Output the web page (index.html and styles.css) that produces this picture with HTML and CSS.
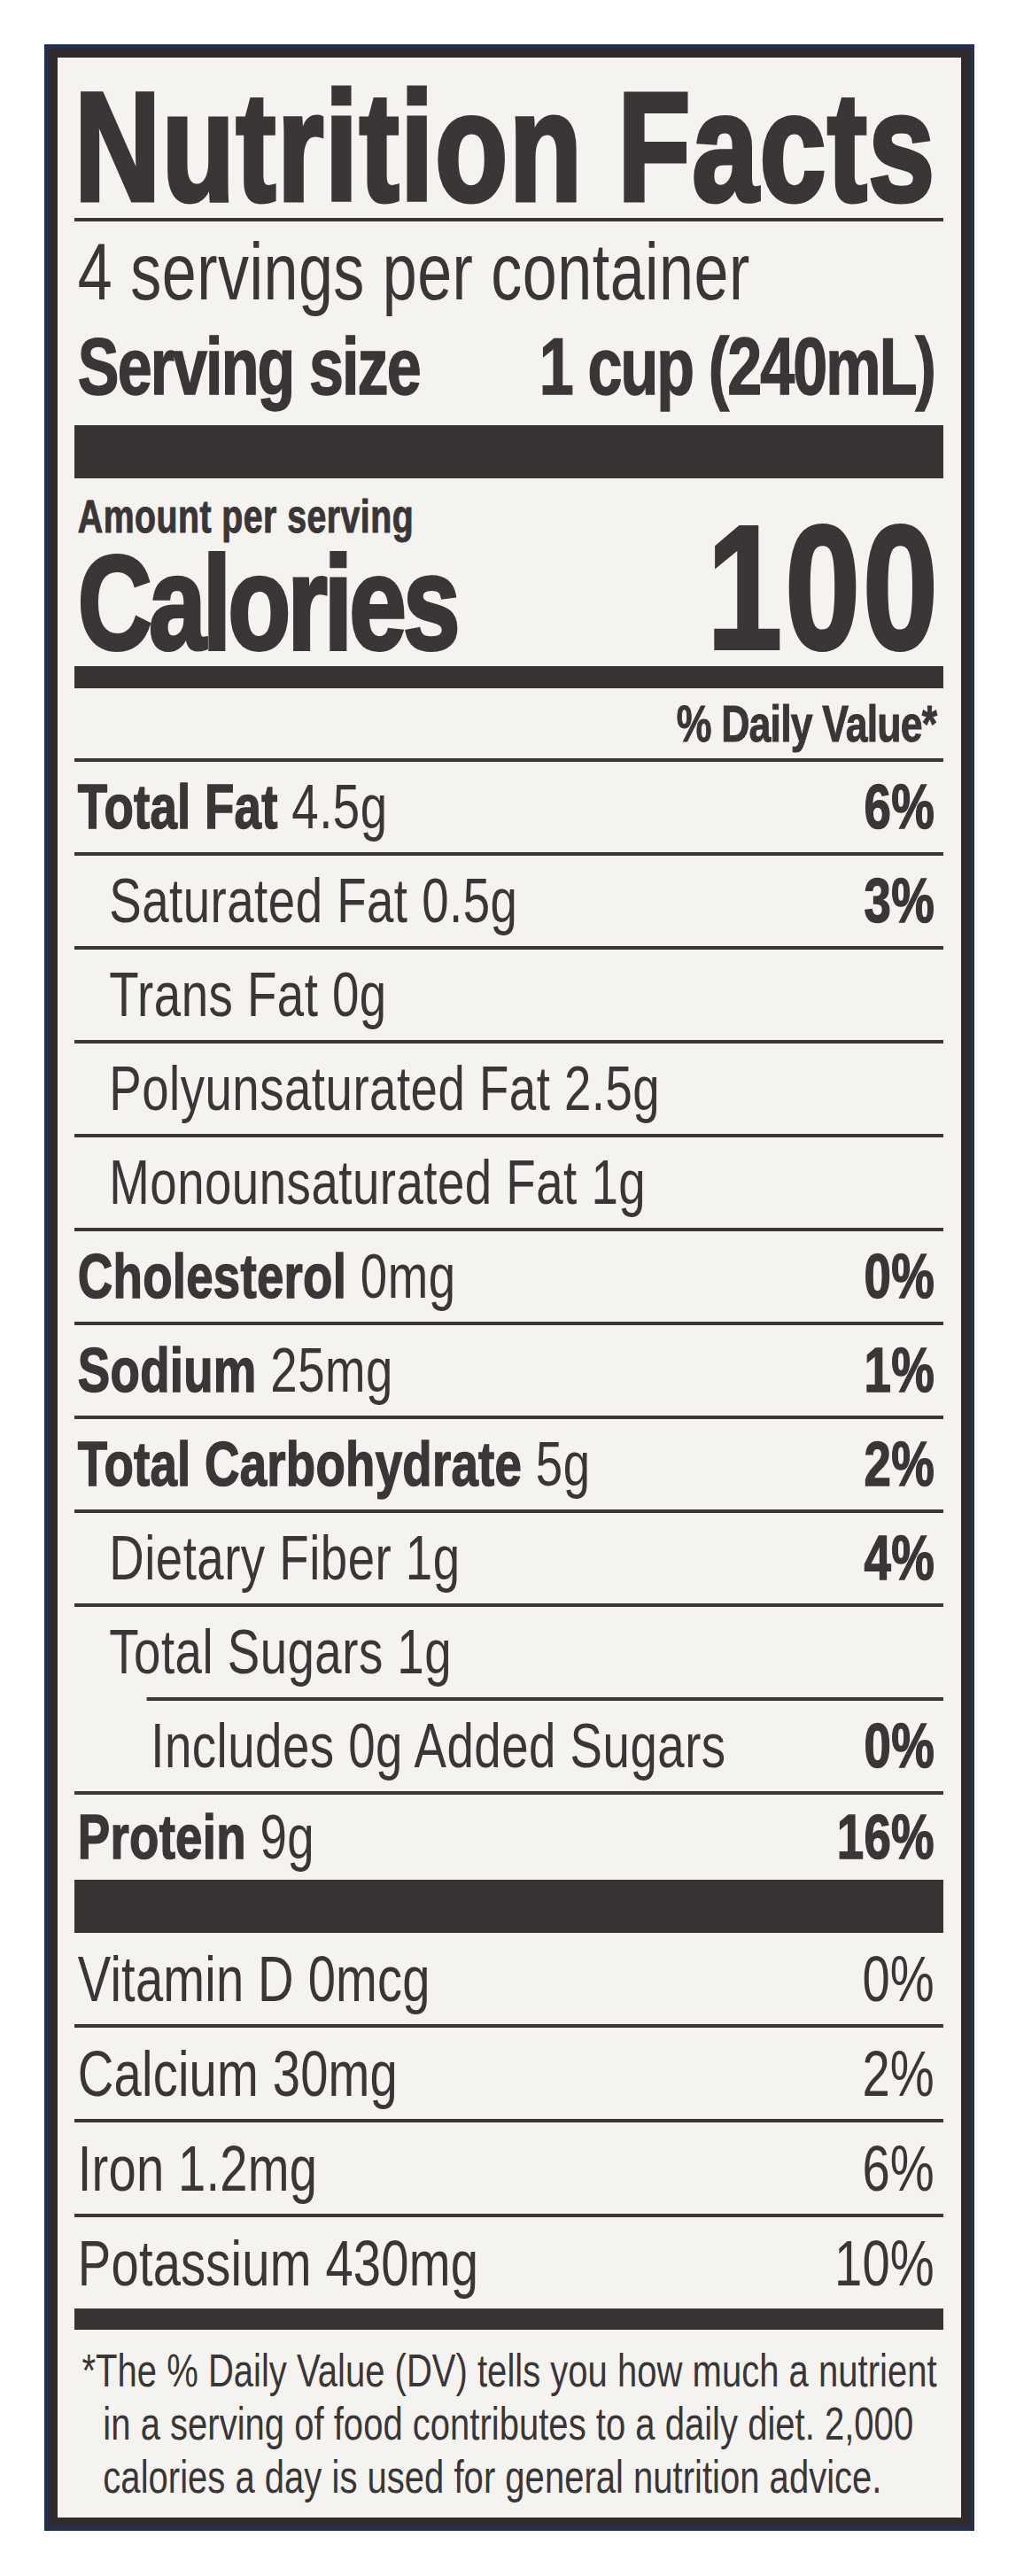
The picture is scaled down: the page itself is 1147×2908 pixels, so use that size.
FILE: index.html
```html
<!DOCTYPE html>
<html lang="en">
<head>
<meta charset="utf-8">
<title>Nutrition Facts</title>
<link rel="stylesheet" href="styles.css">
</head>
<body>
<div class="frame">
  <section class="label">
    <div class="sheet">
      <h1 class="title">Nutrition Facts</h1>
      <div class="servings">
        <p class="per-container">4 servings per container</p>
        <p class="serving-size"><span>Serving size</span><span>1 cup (240mL)</span></p>
      </div>
      <div class="bar bar-thick"></div>
      <div class="calories">
        <div class="cal-left">
          <p class="amount">Amount per serving</p>
          <p class="cal-label">Calories</p>
        </div>
        <p class="cal-value">100</p>
      </div>
      <div class="bar bar-medium"></div>
      <p class="dv-head">% Daily Value*</p>
      <ul class="nutrients">
        <li class="row"><span class="name"><b>Total Fat</b> 4.5g</span><b class="dv">6%</b></li>
        <li class="row sub"><span class="name">Saturated Fat 0.5g</span><b class="dv">3%</b></li>
        <li class="row sub"><span class="name">Trans Fat 0g</span></li>
        <li class="row sub"><span class="name">Polyunsaturated Fat 2.5g</span></li>
        <li class="row sub"><span class="name">Monounsaturated Fat 1g</span></li>
        <li class="row"><span class="name"><b>Cholesterol</b> 0mg</span><b class="dv">0%</b></li>
        <li class="row"><span class="name"><b>Sodium</b> 25mg</span><b class="dv">1%</b></li>
        <li class="row"><span class="name"><b>Total Carbohydrate</b> 5g</span><b class="dv">2%</b></li>
        <li class="row sub"><span class="name">Dietary Fiber 1g</span><b class="dv">4%</b></li>
        <li class="row sub"><span class="name">Total Sugars 1g</span></li>
        <li class="row added"><span class="name">Includes 0g Added Sugars</span><b class="dv">0%</b></li>
        <li class="row protein"><span class="name"><b>Protein</b> 9g</span><b class="dv">16%</b></li>
      </ul>
      <div class="bar bar-thick"></div>
      <ul class="vitamins">
        <li class="vrow"><span class="name">Vitamin D 0mcg</span><span class="dv">0%</span></li>
        <li class="vrow"><span class="name">Calcium 30mg</span><span class="dv">2%</span></li>
        <li class="vrow"><span class="name">Iron 1.2mg</span><span class="dv">6%</span></li>
        <li class="vrow"><span class="name">Potassium 430mg</span><span class="dv">10%</span></li>
      </ul>
      <div class="bar bar-low"></div>
      <p class="footnote">*The % Daily Value (DV) tells you how much a nutrient<br>in a serving of food contributes to a daily diet. 2,000<br>calories a day is used for general nutrition advice.</p>
    </div>
  </section>
</div>
</body>
</html>
```

FILE: styles.css
```css
* {
  box-sizing: border-box;
  margin: 0;
  padding: 0;
}

body {
  background: #ffffff;
  color: #3a3536;
  font-family: "Liberation Sans", Arial, sans-serif;
}

.frame {
  width: 1050px;
  height: 2807px;
  margin: 50px 0 0 50px;
  border: 5px solid #22304d;
}

.label {
  height: 100%;
  border: 10px solid #2f2b2c;
  background: #f4f3ef;
  padding: 0 20px 0 19px;
  overflow: hidden;
}

/* the label type is a condensed grotesque: the sheet is laid out
   1274px wide and narrowed to the 981px column */
.sheet {
  width: 1274px;
  height: 100%;
  transform: scaleX(0.77);
  transform-origin: 0 0;
}

.title {
  height: 181px;
  padding-top: 20px;
  font-size: 175px;
  line-height: 161px;
  font-weight: 700;
  letter-spacing: 1.9px;
  white-space: nowrap;
  -webkit-text-stroke: 5px #3a3536;
}

.servings {
  height: 234px;
  border-top: 4px solid #3a3536;
  padding: 3px 13px 0 5px;
  font-size: 91px;
  line-height: 107px;
  white-space: nowrap;
}

.per-container {
  letter-spacing: 0.6px;
}

.serving-size {
  display: flex;
  justify-content: space-between;
  font-weight: 700;
  letter-spacing: -2.5px;
  -webkit-text-stroke: 1.5px #3a3536;
}

.bar {
  background: #393334;
}

.bar-thick {
  height: 60px;
}

.bar-medium {
  height: 25px;
}

.bar-low {
  height: 24px;
}

.calories {
  height: 212px;
  display: flex;
  justify-content: space-between;
  align-items: flex-end;
  padding: 0 4px 0 5px;
  font-weight: 700;
  white-space: nowrap;
}

.cal-left {
  padding-top: 17px;
}

.amount {
  font-size: 51px;
  line-height: 50px;
  letter-spacing: 0.6px;
  -webkit-text-stroke: 1px #3a3536;
}

.cal-label {
  font-size: 151px;
  line-height: 143px;
  letter-spacing: -5px;
  -webkit-text-stroke: 4px #3a3536;
}

.cal-value {
  font-size: 198px;
  line-height: 176px;
  letter-spacing: 4px;
  -webkit-text-stroke: 4px #3a3536;
}

.dv-head {
  height: 79px;
  padding: 1px 10px 0 0;
  text-align: right;
  font-size: 58px;
  line-height: 78px;
  font-weight: 700;
  letter-spacing: -1.1px;
  -webkit-text-stroke: 1px #3a3536;
}

.nutrients,
.vitamins {
  list-style: none;
}

.row,
.vrow {
  display: flex;
  justify-content: space-between;
  height: 106px;
  border-top: 4px solid #3a3536;
  padding: 0 13px 0 5px;
  font-size: 71px;
  line-height: 102px;
  letter-spacing: 0.6px;
  white-space: nowrap;
}

.row b {
  font-weight: 700;
  letter-spacing: 0.3px;
  -webkit-text-stroke: 1.5px #3a3536;
}

.row.sub {
  padding-left: 51px;
}

.row.added {
  margin-left: 106px;
  padding-left: 6px;
}

.row.protein {
  height: 100px;
  line-height: 96px;
}

.vrow {
  height: 107px;
  font-size: 73px;
  line-height: 103px;
  letter-spacing: 0.2px;
}

.vrow:first-child {
  height: 103px;
  border-top: 0;
}

.footnote {
  height: 212px;
  padding: 16px 0 0 42px;
  text-indent: -31px;
  font-size: 52px;
  line-height: 60px;
  white-space: nowrap;
}
```
